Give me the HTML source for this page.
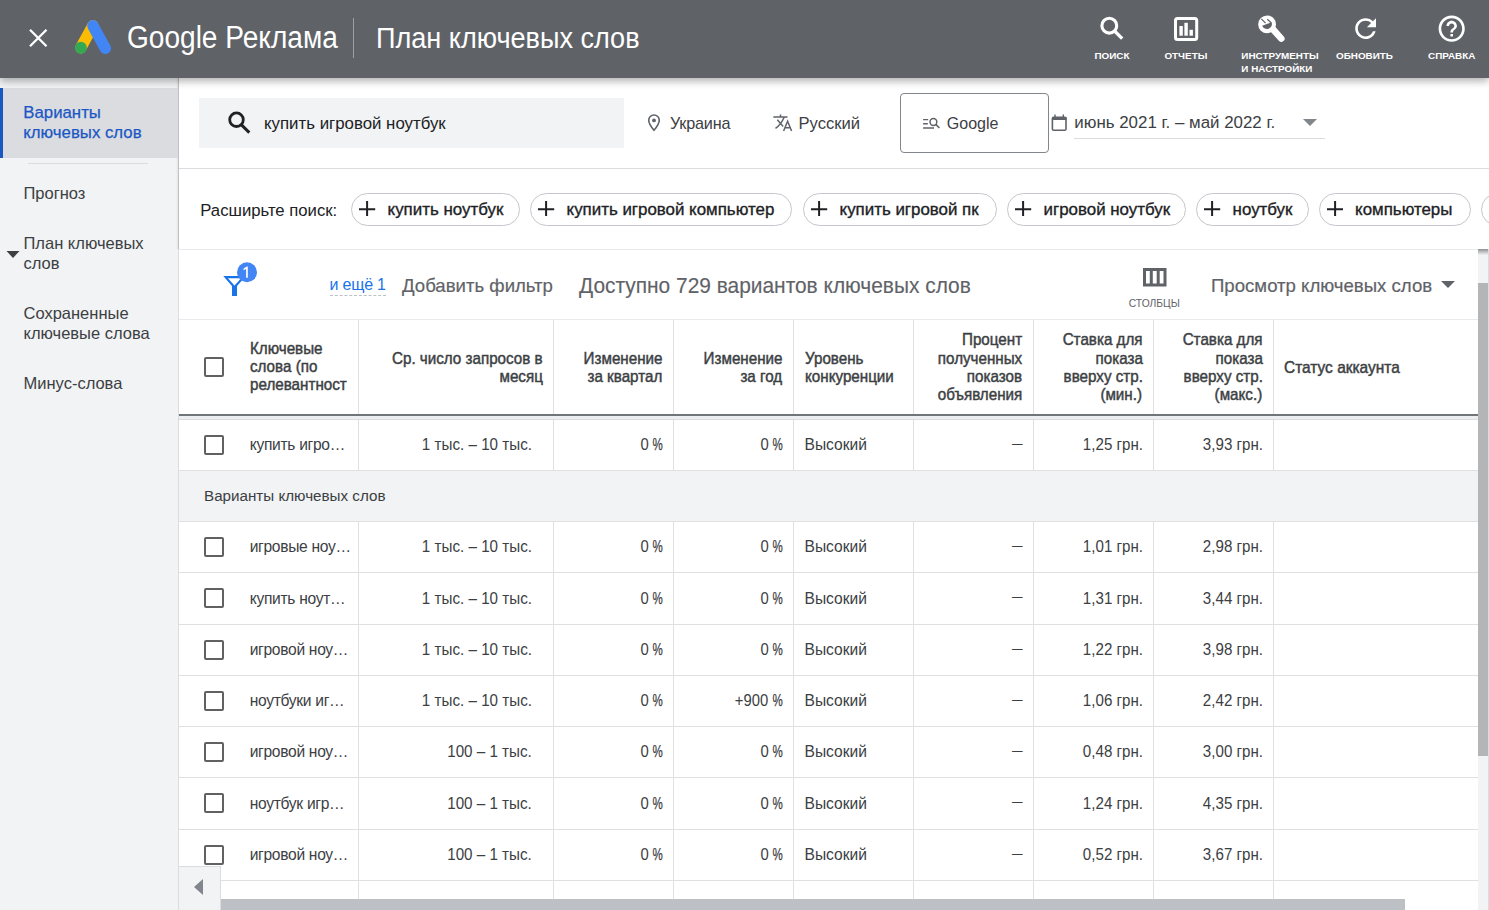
<!DOCTYPE html><html><head><meta charset="utf-8"><title>План ключевых слов</title><style>html,body{margin:0;padding:0}body{width:1489px;height:910px;overflow:hidden;position:relative;background:#fff;font-family:"Liberation Sans",sans-serif}</style></head><body>
<div style="position:absolute;left:0px;top:78px;width:178px;height:832px;background:#f1f3f4;"></div>
<div style="position:absolute;left:178px;top:78px;width:1px;height:832px;background:#dadce0;"></div>
<div style="position:absolute;left:178px;top:78px;width:1px;height:171px;background:#bfc1c4;"></div>
<div style="position:absolute;left:176px;top:78px;width:2px;height:171px;background:linear-gradient(90deg,rgba(0,0,0,0),rgba(0,0,0,0.07));"></div>
<div style="position:absolute;left:0px;top:88px;width:178px;height:70px;background:#dadce0;"></div>
<div style="position:absolute;left:0px;top:88px;width:3px;height:70px;background:#1a57c2;"></div>
<div style="position:absolute;top:103.00px;font-size:16.8px;line-height:20px;color:#1a57c4;white-space:nowrap;-webkit-text-stroke:0.25px #1a57c4;left:23.30px;">Варианты</div>
<div style="position:absolute;top:123.00px;font-size:16.8px;line-height:20px;color:#1a57c4;white-space:nowrap;-webkit-text-stroke:0.25px #1a57c4;left:23.30px;">ключевых слов</div>
<div style="position:absolute;left:28px;top:163px;width:120px;height:1px;background:#dadce0;"></div>
<div style="position:absolute;top:183.00px;font-size:16.5px;line-height:20px;color:#3c4043;white-space:nowrap;left:23.50px;">Прогноз</div>
<div style="position:absolute;top:233.00px;font-size:16.5px;line-height:20px;color:#3c4043;white-space:nowrap;left:23.50px;">План ключевых</div>
<div style="position:absolute;top:253.00px;font-size:16.5px;line-height:20px;color:#3c4043;white-space:nowrap;left:23.50px;">слов</div>
<svg style="position:absolute;left:6px;top:251px;" width="14" height="7" viewBox="0 0 14 7"><path d="M0.5 0H13.5L7 7z" fill="#3c4043"/></svg>
<div style="position:absolute;top:303.00px;font-size:16.5px;line-height:20px;color:#3c4043;white-space:nowrap;left:23.50px;">Сохраненные</div>
<div style="position:absolute;top:323.00px;font-size:16.5px;line-height:20px;color:#3c4043;white-space:nowrap;left:23.50px;">ключевые слова</div>
<div style="position:absolute;top:373.00px;font-size:16.5px;line-height:20px;color:#3c4043;white-space:nowrap;left:23.50px;">Минус-слова</div>
<div style="position:absolute;left:199px;top:98px;width:425px;height:50px;background:#f1f3f4;"></div>
<svg style="position:absolute;left:215px;top:100px;" width="45" height="45" viewBox="215 100 45 45"><circle cx="236.5" cy="119.7" r="6.8" stroke="#202124" stroke-width="2.8" fill="none"/><path d="M241 124.4L249.3 132.6" stroke="#202124" stroke-width="3"/></svg>
<div style="position:absolute;top:114.00px;font-size:17px;line-height:20px;color:#202124;white-space:nowrap;transform:scaleX(0.99);transform-origin:left center;left:264.40px;">купить игровой ноутбук</div>
<svg style="position:absolute;left:0px;top:0px;" width="1489" height="170" viewBox="0 0 1489 170"><path d="M654 130.3C650.6 126.3 648.7 123.3 648.7 120.3A5.3 5.3 0 0 1 659.3 120.3C659.3 123.3 657.4 126.3 654 130.3Z" stroke="#5f6368" stroke-width="1.6" fill="none" stroke-linejoin="round"/><circle cx="654" cy="120.4" r="1.9" fill="#5f6368"/><path d="M773.3 117H787.5M780.5 114.6V117M784 117.5C782 122.5 779 126 775.5 128.3M777.3 119.8L783.2 126.4M783.6 131L787.6 121.3L791.6 131M784.8 127.8H790.4" stroke="#5f6368" stroke-width="1.5" fill="none"/><path d="M923.1 119.6H928.2M923.1 123.8H927.8M923.1 128H934" stroke="#5f6368" stroke-width="1.4"/><circle cx="933.4" cy="122" r="3.4" stroke="#5f6368" stroke-width="1.5" fill="none"/><path d="M935.8 124.4L939.4 128" stroke="#5f6368" stroke-width="1.6"/><rect x="1052.4" y="117.2" width="13.6" height="13" rx="1.3" stroke="#5f6368" stroke-width="1.6" fill="none"/><rect x="1052" y="117" width="14.5" height="3" fill="#5f6368"/><path d="M1055 114.5V117M1063.3 114.5V117" stroke="#5f6368" stroke-width="1.4"/></svg>
<div style="position:absolute;top:114.00px;font-size:16.2px;line-height:19px;color:#3c4043;white-space:nowrap;letter-spacing:-0.2px;left:670.00px;">Украина</div>
<div style="position:absolute;top:114.00px;font-size:16.6px;line-height:20px;color:#3c4043;white-space:nowrap;left:798.50px;">Русский</div>
<div style="position:absolute;left:900px;top:93px;width:147px;height:58px;background:transparent;border:1px solid #80868b;border-radius:4px;"></div>
<div style="position:absolute;top:114.00px;font-size:16px;line-height:19px;color:#3c4043;white-space:nowrap;left:946.80px;">Google</div>
<div style="position:absolute;top:113.00px;font-size:16.9px;line-height:20px;color:#3c4043;white-space:nowrap;left:1074.30px;">июнь 2021 г. – май 2022 г.</div>
<svg style="position:absolute;left:1302.5px;top:119px;" width="14" height="7" viewBox="0 0 14 7"><path d="M0 0H14L7 7z" fill="#80868b"/></svg>
<div style="position:absolute;left:1074px;top:138px;width:251px;height:1px;background:#dadce0;"></div>
<div style="position:absolute;left:179px;top:168px;width:1310px;height:1px;background:#dadce0;"></div>
<div style="position:absolute;top:201.00px;font-size:16.7px;line-height:20px;color:#202124;white-space:nowrap;left:200.30px;">Расширьте поиск:</div>
<div style="position:absolute;left:351px;top:193px;width:167px;height:31px;background:transparent;border:1px solid #c4c7cb;border-radius:17px;"></div>
<svg style="position:absolute;left:359px;top:200.7px;" width="16.5" height="15.5" viewBox="0 0 16.5 15.5"><path d="M0 8.2H16.2M8.1 0V15.3" stroke="#202124" stroke-width="2" fill="none"/></svg>
<div style="position:absolute;top:200.00px;font-size:16.9px;line-height:20px;color:#202124;white-space:nowrap;-webkit-text-stroke:0.35px #202124;left:387.60px;">купить ноутбук</div>
<div style="position:absolute;left:530px;top:193px;width:260px;height:31px;background:transparent;border:1px solid #c4c7cb;border-radius:17px;"></div>
<svg style="position:absolute;left:538px;top:200.7px;" width="16.5" height="15.5" viewBox="0 0 16.5 15.5"><path d="M0 8.2H16.2M8.1 0V15.3" stroke="#202124" stroke-width="2" fill="none"/></svg>
<div style="position:absolute;top:200.00px;font-size:16.9px;line-height:20px;color:#202124;white-space:nowrap;-webkit-text-stroke:0.35px #202124;left:566.60px;">купить игровой компьютер</div>
<div style="position:absolute;left:803px;top:193px;width:191.5px;height:31px;background:transparent;border:1px solid #c4c7cb;border-radius:17px;"></div>
<svg style="position:absolute;left:811px;top:200.7px;" width="16.5" height="15.5" viewBox="0 0 16.5 15.5"><path d="M0 8.2H16.2M8.1 0V15.3" stroke="#202124" stroke-width="2" fill="none"/></svg>
<div style="position:absolute;top:200.00px;font-size:16.9px;line-height:20px;color:#202124;white-space:nowrap;-webkit-text-stroke:0.35px #202124;left:839.60px;">купить игровой пк</div>
<div style="position:absolute;left:1007px;top:193px;width:177px;height:31px;background:transparent;border:1px solid #c4c7cb;border-radius:17px;"></div>
<svg style="position:absolute;left:1015px;top:200.7px;" width="16.5" height="15.5" viewBox="0 0 16.5 15.5"><path d="M0 8.2H16.2M8.1 0V15.3" stroke="#202124" stroke-width="2" fill="none"/></svg>
<div style="position:absolute;top:200.00px;font-size:16.9px;line-height:20px;color:#202124;white-space:nowrap;-webkit-text-stroke:0.35px #202124;left:1043.60px;">игровой ноутбук</div>
<div style="position:absolute;left:1196px;top:193px;width:110.5px;height:31px;background:transparent;border:1px solid #c4c7cb;border-radius:17px;"></div>
<svg style="position:absolute;left:1204px;top:200.7px;" width="16.5" height="15.5" viewBox="0 0 16.5 15.5"><path d="M0 8.2H16.2M8.1 0V15.3" stroke="#202124" stroke-width="2" fill="none"/></svg>
<div style="position:absolute;top:200.00px;font-size:16.9px;line-height:20px;color:#202124;white-space:nowrap;-webkit-text-stroke:0.35px #202124;left:1232.60px;">ноутбук</div>
<div style="position:absolute;left:1318.5px;top:193px;width:150.0px;height:31px;background:transparent;border:1px solid #c4c7cb;border-radius:17px;"></div>
<svg style="position:absolute;left:1326.5px;top:200.7px;" width="16.5" height="15.5" viewBox="0 0 16.5 15.5"><path d="M0 8.2H16.2M8.1 0V15.3" stroke="#202124" stroke-width="2" fill="none"/></svg>
<div style="position:absolute;top:200.00px;font-size:16.9px;line-height:20px;color:#202124;white-space:nowrap;-webkit-text-stroke:0.35px #202124;left:1355.10px;">компьютеры</div>
<div style="position:absolute;left:1480.5px;top:193px;width:157.5px;height:31px;background:transparent;border:1px solid #c4c7cb;border-radius:17px;"></div>
<div style="position:absolute;left:179px;top:249px;width:1299px;height:1px;background:#e8eaed;"></div>
<svg style="position:absolute;left:215px;top:255px;" width="50" height="50" viewBox="215 255 50 50"><path d="M225.6 277.1H243.5L234.5 287.3z" stroke="#1a73e8" stroke-width="2.1" fill="none" stroke-linejoin="miter"/><rect x="232" y="286" width="5" height="10" fill="#1a73e8"/><circle cx="247" cy="272.3" r="10" fill="#4285f4"/></svg>
<svg style="position:absolute;left:215px;top:255px;" width="50" height="50" viewBox="215 255 50 50"><path d="M247.8 277.8V266.6H246.9L243.6 268.6V270.2L246.1 268.9V277.8z" fill="#fff"/></svg>
<div style="position:absolute;top:275.00px;font-size:16px;line-height:19px;color:#1a73e8;white-space:nowrap;letter-spacing:-0.2px;left:329.50px;">и ещё 1</div>
<div style="position:absolute;left:330px;top:295px;width:56px;height:0;border-top:1px dashed #bdc1c6"></div>
<div style="position:absolute;top:275.00px;font-size:18.6px;line-height:22px;color:#5f6368;white-space:nowrap;-webkit-text-stroke:0.2px #5f6368;left:402.00px;">Добавить фильтр</div>
<div style="position:absolute;top:273.00px;font-size:22px;line-height:26px;color:#5f6368;white-space:nowrap;-webkit-text-stroke:0.15px #5f6368;transform:scaleX(0.95);transform-origin:left center;left:579.00px;">Доступно 729 вариантов ключевых слов</div>
<svg style="position:absolute;left:1143px;top:268px;" width="23.5" height="18.5" viewBox="0 0 23.5 18.5"><path d="M1.5 1.5H22V17H1.5zM8.3 1.5V17M15.2 1.5V17" stroke="#5f6368" stroke-width="3" fill="none"/></svg>
<div style="position:absolute;top:298.00px;font-size:10.3px;line-height:12px;color:#5f6368;white-space:nowrap;left:1104.30px;width:100px;text-align:center;">СТОЛБЦЫ</div>
<div style="position:absolute;top:275.00px;font-size:18.6px;line-height:22px;color:#5f6368;white-space:nowrap;-webkit-text-stroke:0.2px #5f6368;left:1211.00px;">Просмотр ключевых слов</div>
<svg style="position:absolute;left:1441px;top:281px;" width="14" height="7" viewBox="0 0 14 7"><path d="M0 0H14L7 7z" fill="#5f6368"/></svg>
<div style="position:absolute;left:179px;top:319px;width:1299px;height:1px;background:#e8eaed;"></div>
<div style="position:absolute;left:358px;top:320px;width:1px;height:94px;background:#e0e0e0;"></div>
<div style="position:absolute;left:553px;top:320px;width:1px;height:94px;background:#e0e0e0;"></div>
<div style="position:absolute;left:673px;top:320px;width:1px;height:94px;background:#e0e0e0;"></div>
<div style="position:absolute;left:793px;top:320px;width:1px;height:94px;background:#e0e0e0;"></div>
<div style="position:absolute;left:913px;top:320px;width:1px;height:94px;background:#e0e0e0;"></div>
<div style="position:absolute;left:1033px;top:320px;width:1px;height:94px;background:#e0e0e0;"></div>
<div style="position:absolute;left:1153px;top:320px;width:1px;height:94px;background:#e0e0e0;"></div>
<div style="position:absolute;left:1273px;top:320px;width:1px;height:94px;background:#e0e0e0;"></div>
<div style="position:absolute;left:179px;top:414px;width:1299px;height:2px;background:#70757a;"></div>
<div style="position:absolute;left:179px;top:416px;width:1299px;height:3px;background:#eceef0;"></div>
<div style="position:absolute;left:179px;top:419px;width:1299px;height:1px;background:#dadce0;"></div>
<div style="position:absolute;left:204px;top:357.0px;width:16px;height:16px;border:2px solid #616161;border-radius:2px"></div>
<div style="position:absolute;top:339.00px;font-size:15.7px;line-height:19px;color:#3c4043;white-space:nowrap;-webkit-text-stroke:0.45px #3c4043;transform:scaleX(0.968);transform-origin:left center;left:249.70px;">Ключевые</div>
<div style="position:absolute;top:357.00px;font-size:15.7px;line-height:19px;color:#3c4043;white-space:nowrap;-webkit-text-stroke:0.45px #3c4043;transform:scaleX(0.968);transform-origin:left center;left:249.70px;">слова (по</div>
<div style="position:absolute;top:375.00px;font-size:15.7px;line-height:19px;color:#3c4043;white-space:nowrap;-webkit-text-stroke:0.45px #3c4043;transform:scaleX(0.968);transform-origin:left center;left:249.70px;">релевантност</div>
<div style="position:absolute;top:349.00px;font-size:15.7px;line-height:19px;color:#3c4043;white-space:nowrap;-webkit-text-stroke:0.45px #3c4043;transform:scaleX(0.968);transform-origin:right center;right:946.40px;text-align:right;">Ср. число запросов в</div>
<div style="position:absolute;top:367.00px;font-size:15.7px;line-height:19px;color:#3c4043;white-space:nowrap;-webkit-text-stroke:0.45px #3c4043;transform:scaleX(0.968);transform-origin:right center;right:946.40px;text-align:right;">месяц</div>
<div style="position:absolute;top:349.00px;font-size:15.7px;line-height:19px;color:#3c4043;white-space:nowrap;-webkit-text-stroke:0.45px #3c4043;transform:scaleX(0.968);transform-origin:right center;right:826.50px;text-align:right;">Изменение</div>
<div style="position:absolute;top:367.00px;font-size:15.7px;line-height:19px;color:#3c4043;white-space:nowrap;-webkit-text-stroke:0.45px #3c4043;transform:scaleX(0.968);transform-origin:right center;right:826.50px;text-align:right;">за квартал</div>
<div style="position:absolute;top:349.00px;font-size:15.7px;line-height:19px;color:#3c4043;white-space:nowrap;-webkit-text-stroke:0.45px #3c4043;transform:scaleX(0.968);transform-origin:right center;right:706.50px;text-align:right;">Изменение</div>
<div style="position:absolute;top:367.00px;font-size:15.7px;line-height:19px;color:#3c4043;white-space:nowrap;-webkit-text-stroke:0.45px #3c4043;transform:scaleX(0.968);transform-origin:right center;right:706.50px;text-align:right;">за год</div>
<div style="position:absolute;top:349.00px;font-size:15.7px;line-height:19px;color:#3c4043;white-space:nowrap;-webkit-text-stroke:0.45px #3c4043;transform:scaleX(0.968);transform-origin:left center;left:804.70px;">Уровень</div>
<div style="position:absolute;top:367.00px;font-size:15.7px;line-height:19px;color:#3c4043;white-space:nowrap;-webkit-text-stroke:0.45px #3c4043;transform:scaleX(0.968);transform-origin:left center;left:804.70px;">конкуренции</div>
<div style="position:absolute;top:330.00px;font-size:15.7px;line-height:19px;color:#3c4043;white-space:nowrap;-webkit-text-stroke:0.45px #3c4043;transform:scaleX(0.968);transform-origin:right center;right:466.50px;text-align:right;">Процент</div>
<div style="position:absolute;top:349.00px;font-size:15.7px;line-height:19px;color:#3c4043;white-space:nowrap;-webkit-text-stroke:0.45px #3c4043;transform:scaleX(0.968);transform-origin:right center;right:466.50px;text-align:right;">полученных</div>
<div style="position:absolute;top:367.00px;font-size:15.7px;line-height:19px;color:#3c4043;white-space:nowrap;-webkit-text-stroke:0.45px #3c4043;transform:scaleX(0.968);transform-origin:right center;right:466.50px;text-align:right;">показов</div>
<div style="position:absolute;top:385.00px;font-size:15.7px;line-height:19px;color:#3c4043;white-space:nowrap;-webkit-text-stroke:0.45px #3c4043;transform:scaleX(0.968);transform-origin:right center;right:466.50px;text-align:right;">объявления</div>
<div style="position:absolute;top:330.00px;font-size:15.7px;line-height:19px;color:#3c4043;white-space:nowrap;-webkit-text-stroke:0.45px #3c4043;transform:scaleX(0.968);transform-origin:right center;right:346.50px;text-align:right;">Ставка для</div>
<div style="position:absolute;top:349.00px;font-size:15.7px;line-height:19px;color:#3c4043;white-space:nowrap;-webkit-text-stroke:0.45px #3c4043;transform:scaleX(0.968);transform-origin:right center;right:346.50px;text-align:right;">показа</div>
<div style="position:absolute;top:367.00px;font-size:15.7px;line-height:19px;color:#3c4043;white-space:nowrap;-webkit-text-stroke:0.45px #3c4043;transform:scaleX(0.968);transform-origin:right center;right:346.50px;text-align:right;">вверху стр.</div>
<div style="position:absolute;top:385.00px;font-size:15.7px;line-height:19px;color:#3c4043;white-space:nowrap;-webkit-text-stroke:0.45px #3c4043;transform:scaleX(0.968);transform-origin:right center;right:346.50px;text-align:right;">(мин.)</div>
<div style="position:absolute;top:330.00px;font-size:15.7px;line-height:19px;color:#3c4043;white-space:nowrap;-webkit-text-stroke:0.45px #3c4043;transform:scaleX(0.968);transform-origin:right center;right:226.50px;text-align:right;">Ставка для</div>
<div style="position:absolute;top:349.00px;font-size:15.7px;line-height:19px;color:#3c4043;white-space:nowrap;-webkit-text-stroke:0.45px #3c4043;transform:scaleX(0.968);transform-origin:right center;right:226.50px;text-align:right;">показа</div>
<div style="position:absolute;top:367.00px;font-size:15.7px;line-height:19px;color:#3c4043;white-space:nowrap;-webkit-text-stroke:0.45px #3c4043;transform:scaleX(0.968);transform-origin:right center;right:226.50px;text-align:right;">вверху стр.</div>
<div style="position:absolute;top:385.00px;font-size:15.7px;line-height:19px;color:#3c4043;white-space:nowrap;-webkit-text-stroke:0.45px #3c4043;transform:scaleX(0.968);transform-origin:right center;right:226.50px;text-align:right;">(макс.)</div>
<div style="position:absolute;top:358.00px;font-size:15.7px;line-height:19px;color:#3c4043;white-space:nowrap;-webkit-text-stroke:0.45px #3c4043;transform:scaleX(0.985);transform-origin:left center;left:1284.00px;">Статус аккаунта</div>
<div style="position:absolute;left:358px;top:420px;width:1px;height:50px;background:#e0e0e0;"></div>
<div style="position:absolute;left:553px;top:420px;width:1px;height:50px;background:#e0e0e0;"></div>
<div style="position:absolute;left:673px;top:420px;width:1px;height:50px;background:#e0e0e0;"></div>
<div style="position:absolute;left:793px;top:420px;width:1px;height:50px;background:#e0e0e0;"></div>
<div style="position:absolute;left:913px;top:420px;width:1px;height:50px;background:#e0e0e0;"></div>
<div style="position:absolute;left:1033px;top:420px;width:1px;height:50px;background:#e0e0e0;"></div>
<div style="position:absolute;left:1153px;top:420px;width:1px;height:50px;background:#e0e0e0;"></div>
<div style="position:absolute;left:1273px;top:420px;width:1px;height:50px;background:#e0e0e0;"></div>
<div style="position:absolute;left:204px;top:434.5px;width:16px;height:16px;border:2px solid #616161;border-radius:2px"></div>
<div style="position:absolute;top:435.00px;font-size:15.6px;line-height:19px;color:#3c4043;white-space:nowrap;letter-spacing:-0.3px;left:249.70px;">купить игро…</div>
<div style="position:absolute;top:435.00px;font-size:15.6px;line-height:19px;color:#3c4043;white-space:nowrap;transform:scaleX(0.975);transform-origin:right center;right:956.70px;text-align:right;">1 тыс. – 10 тыс.</div>
<div style="position:absolute;top:435.00px;font-size:15.6px;line-height:19px;color:#3c4043;white-space:nowrap;transform:scaleX(0.95);transform-origin:right center;right:840.80px;text-align:right;">0</div>
<div style="position:absolute;top:435.00px;font-size:15.6px;line-height:19px;color:#3c4043;white-space:nowrap;-webkit-text-stroke:0.25px #3c4043;transform:scaleX(0.74);transform-origin:right center;right:826.20px;text-align:right;">%</div>
<div style="position:absolute;top:435.00px;font-size:15.6px;line-height:19px;color:#3c4043;white-space:nowrap;transform:scaleX(0.95);transform-origin:right center;right:720.80px;text-align:right;">0</div>
<div style="position:absolute;top:435.00px;font-size:15.6px;line-height:19px;color:#3c4043;white-space:nowrap;-webkit-text-stroke:0.25px #3c4043;transform:scaleX(0.74);transform-origin:right center;right:706.20px;text-align:right;">%</div>
<div style="position:absolute;top:435.00px;font-size:15.6px;line-height:19px;color:#3c4043;white-space:nowrap;left:804.50px;">Высокий</div>
<div style="position:absolute;top:434.00px;font-size:15.2px;line-height:18px;color:#3c4043;white-space:nowrap;transform:scaleX(1.25);transform-origin:right center;right:466.40px;text-align:right;">–</div>
<div style="position:absolute;top:435.00px;font-size:15.6px;line-height:19px;color:#3c4043;white-space:nowrap;transform:scaleX(0.97);transform-origin:right center;right:346.50px;text-align:right;">1,25 грн.</div>
<div style="position:absolute;top:435.00px;font-size:15.6px;line-height:19px;color:#3c4043;white-space:nowrap;transform:scaleX(0.97);transform-origin:right center;right:226.50px;text-align:right;">3,93 грн.</div>
<div style="position:absolute;left:179px;top:470px;width:1299px;height:1px;background:#e0e0e0;"></div>
<div style="position:absolute;left:179px;top:471px;width:1299px;height:50px;background:#f1f3f4;"></div>
<div style="position:absolute;top:487.00px;font-size:15.2px;line-height:18px;color:#3c4043;white-space:nowrap;left:204.00px;">Варианты ключевых слов</div>
<div style="position:absolute;left:179px;top:521px;width:1299px;height:1px;background:#e0e0e0;"></div>
<div style="position:absolute;left:358px;top:522px;width:1px;height:50px;background:#e0e0e0;"></div>
<div style="position:absolute;left:553px;top:522px;width:1px;height:50px;background:#e0e0e0;"></div>
<div style="position:absolute;left:673px;top:522px;width:1px;height:50px;background:#e0e0e0;"></div>
<div style="position:absolute;left:793px;top:522px;width:1px;height:50px;background:#e0e0e0;"></div>
<div style="position:absolute;left:913px;top:522px;width:1px;height:50px;background:#e0e0e0;"></div>
<div style="position:absolute;left:1033px;top:522px;width:1px;height:50px;background:#e0e0e0;"></div>
<div style="position:absolute;left:1153px;top:522px;width:1px;height:50px;background:#e0e0e0;"></div>
<div style="position:absolute;left:1273px;top:522px;width:1px;height:50px;background:#e0e0e0;"></div>
<div style="position:absolute;left:204px;top:536.5px;width:16px;height:16px;border:2px solid #616161;border-radius:2px"></div>
<div style="position:absolute;top:537.00px;font-size:15.6px;line-height:19px;color:#3c4043;white-space:nowrap;letter-spacing:-0.3px;left:249.70px;">игровые ноу…</div>
<div style="position:absolute;top:537.00px;font-size:15.6px;line-height:19px;color:#3c4043;white-space:nowrap;transform:scaleX(0.975);transform-origin:right center;right:956.70px;text-align:right;">1 тыс. – 10 тыс.</div>
<div style="position:absolute;top:537.00px;font-size:15.6px;line-height:19px;color:#3c4043;white-space:nowrap;transform:scaleX(0.95);transform-origin:right center;right:840.80px;text-align:right;">0</div>
<div style="position:absolute;top:537.00px;font-size:15.6px;line-height:19px;color:#3c4043;white-space:nowrap;-webkit-text-stroke:0.25px #3c4043;transform:scaleX(0.74);transform-origin:right center;right:826.20px;text-align:right;">%</div>
<div style="position:absolute;top:537.00px;font-size:15.6px;line-height:19px;color:#3c4043;white-space:nowrap;transform:scaleX(0.95);transform-origin:right center;right:720.80px;text-align:right;">0</div>
<div style="position:absolute;top:537.00px;font-size:15.6px;line-height:19px;color:#3c4043;white-space:nowrap;-webkit-text-stroke:0.25px #3c4043;transform:scaleX(0.74);transform-origin:right center;right:706.20px;text-align:right;">%</div>
<div style="position:absolute;top:537.00px;font-size:15.6px;line-height:19px;color:#3c4043;white-space:nowrap;left:804.50px;">Высокий</div>
<div style="position:absolute;top:536.00px;font-size:15.2px;line-height:18px;color:#3c4043;white-space:nowrap;transform:scaleX(1.25);transform-origin:right center;right:466.40px;text-align:right;">–</div>
<div style="position:absolute;top:537.00px;font-size:15.6px;line-height:19px;color:#3c4043;white-space:nowrap;transform:scaleX(0.97);transform-origin:right center;right:346.50px;text-align:right;">1,01 грн.</div>
<div style="position:absolute;top:537.00px;font-size:15.6px;line-height:19px;color:#3c4043;white-space:nowrap;transform:scaleX(0.97);transform-origin:right center;right:226.50px;text-align:right;">2,98 грн.</div>
<div style="position:absolute;left:179px;top:572px;width:1299px;height:1px;background:#e0e0e0;"></div>
<div style="position:absolute;left:358px;top:573px;width:1px;height:51px;background:#e0e0e0;"></div>
<div style="position:absolute;left:553px;top:573px;width:1px;height:51px;background:#e0e0e0;"></div>
<div style="position:absolute;left:673px;top:573px;width:1px;height:51px;background:#e0e0e0;"></div>
<div style="position:absolute;left:793px;top:573px;width:1px;height:51px;background:#e0e0e0;"></div>
<div style="position:absolute;left:913px;top:573px;width:1px;height:51px;background:#e0e0e0;"></div>
<div style="position:absolute;left:1033px;top:573px;width:1px;height:51px;background:#e0e0e0;"></div>
<div style="position:absolute;left:1153px;top:573px;width:1px;height:51px;background:#e0e0e0;"></div>
<div style="position:absolute;left:1273px;top:573px;width:1px;height:51px;background:#e0e0e0;"></div>
<div style="position:absolute;left:204px;top:588.0px;width:16px;height:16px;border:2px solid #616161;border-radius:2px"></div>
<div style="position:absolute;top:589.00px;font-size:15.6px;line-height:19px;color:#3c4043;white-space:nowrap;letter-spacing:-0.3px;left:249.70px;">купить ноут…</div>
<div style="position:absolute;top:589.00px;font-size:15.6px;line-height:19px;color:#3c4043;white-space:nowrap;transform:scaleX(0.975);transform-origin:right center;right:956.70px;text-align:right;">1 тыс. – 10 тыс.</div>
<div style="position:absolute;top:589.00px;font-size:15.6px;line-height:19px;color:#3c4043;white-space:nowrap;transform:scaleX(0.95);transform-origin:right center;right:840.80px;text-align:right;">0</div>
<div style="position:absolute;top:589.00px;font-size:15.6px;line-height:19px;color:#3c4043;white-space:nowrap;-webkit-text-stroke:0.25px #3c4043;transform:scaleX(0.74);transform-origin:right center;right:826.20px;text-align:right;">%</div>
<div style="position:absolute;top:589.00px;font-size:15.6px;line-height:19px;color:#3c4043;white-space:nowrap;transform:scaleX(0.95);transform-origin:right center;right:720.80px;text-align:right;">0</div>
<div style="position:absolute;top:589.00px;font-size:15.6px;line-height:19px;color:#3c4043;white-space:nowrap;-webkit-text-stroke:0.25px #3c4043;transform:scaleX(0.74);transform-origin:right center;right:706.20px;text-align:right;">%</div>
<div style="position:absolute;top:589.00px;font-size:15.6px;line-height:19px;color:#3c4043;white-space:nowrap;left:804.50px;">Высокий</div>
<div style="position:absolute;top:587.00px;font-size:15.2px;line-height:18px;color:#3c4043;white-space:nowrap;transform:scaleX(1.25);transform-origin:right center;right:466.40px;text-align:right;">–</div>
<div style="position:absolute;top:589.00px;font-size:15.6px;line-height:19px;color:#3c4043;white-space:nowrap;transform:scaleX(0.97);transform-origin:right center;right:346.50px;text-align:right;">1,31 грн.</div>
<div style="position:absolute;top:589.00px;font-size:15.6px;line-height:19px;color:#3c4043;white-space:nowrap;transform:scaleX(0.97);transform-origin:right center;right:226.50px;text-align:right;">3,44 грн.</div>
<div style="position:absolute;left:179px;top:624px;width:1299px;height:1px;background:#e0e0e0;"></div>
<div style="position:absolute;left:358px;top:625px;width:1px;height:50px;background:#e0e0e0;"></div>
<div style="position:absolute;left:553px;top:625px;width:1px;height:50px;background:#e0e0e0;"></div>
<div style="position:absolute;left:673px;top:625px;width:1px;height:50px;background:#e0e0e0;"></div>
<div style="position:absolute;left:793px;top:625px;width:1px;height:50px;background:#e0e0e0;"></div>
<div style="position:absolute;left:913px;top:625px;width:1px;height:50px;background:#e0e0e0;"></div>
<div style="position:absolute;left:1033px;top:625px;width:1px;height:50px;background:#e0e0e0;"></div>
<div style="position:absolute;left:1153px;top:625px;width:1px;height:50px;background:#e0e0e0;"></div>
<div style="position:absolute;left:1273px;top:625px;width:1px;height:50px;background:#e0e0e0;"></div>
<div style="position:absolute;left:204px;top:639.5px;width:16px;height:16px;border:2px solid #616161;border-radius:2px"></div>
<div style="position:absolute;top:640.00px;font-size:15.6px;line-height:19px;color:#3c4043;white-space:nowrap;letter-spacing:-0.3px;left:249.70px;">игровой ноу…</div>
<div style="position:absolute;top:640.00px;font-size:15.6px;line-height:19px;color:#3c4043;white-space:nowrap;transform:scaleX(0.975);transform-origin:right center;right:956.70px;text-align:right;">1 тыс. – 10 тыс.</div>
<div style="position:absolute;top:640.00px;font-size:15.6px;line-height:19px;color:#3c4043;white-space:nowrap;transform:scaleX(0.95);transform-origin:right center;right:840.80px;text-align:right;">0</div>
<div style="position:absolute;top:640.00px;font-size:15.6px;line-height:19px;color:#3c4043;white-space:nowrap;-webkit-text-stroke:0.25px #3c4043;transform:scaleX(0.74);transform-origin:right center;right:826.20px;text-align:right;">%</div>
<div style="position:absolute;top:640.00px;font-size:15.6px;line-height:19px;color:#3c4043;white-space:nowrap;transform:scaleX(0.95);transform-origin:right center;right:720.80px;text-align:right;">0</div>
<div style="position:absolute;top:640.00px;font-size:15.6px;line-height:19px;color:#3c4043;white-space:nowrap;-webkit-text-stroke:0.25px #3c4043;transform:scaleX(0.74);transform-origin:right center;right:706.20px;text-align:right;">%</div>
<div style="position:absolute;top:640.00px;font-size:15.6px;line-height:19px;color:#3c4043;white-space:nowrap;left:804.50px;">Высокий</div>
<div style="position:absolute;top:639.00px;font-size:15.2px;line-height:18px;color:#3c4043;white-space:nowrap;transform:scaleX(1.25);transform-origin:right center;right:466.40px;text-align:right;">–</div>
<div style="position:absolute;top:640.00px;font-size:15.6px;line-height:19px;color:#3c4043;white-space:nowrap;transform:scaleX(0.97);transform-origin:right center;right:346.50px;text-align:right;">1,22 грн.</div>
<div style="position:absolute;top:640.00px;font-size:15.6px;line-height:19px;color:#3c4043;white-space:nowrap;transform:scaleX(0.97);transform-origin:right center;right:226.50px;text-align:right;">3,98 грн.</div>
<div style="position:absolute;left:179px;top:675px;width:1299px;height:1px;background:#e0e0e0;"></div>
<div style="position:absolute;left:358px;top:676px;width:1px;height:50px;background:#e0e0e0;"></div>
<div style="position:absolute;left:553px;top:676px;width:1px;height:50px;background:#e0e0e0;"></div>
<div style="position:absolute;left:673px;top:676px;width:1px;height:50px;background:#e0e0e0;"></div>
<div style="position:absolute;left:793px;top:676px;width:1px;height:50px;background:#e0e0e0;"></div>
<div style="position:absolute;left:913px;top:676px;width:1px;height:50px;background:#e0e0e0;"></div>
<div style="position:absolute;left:1033px;top:676px;width:1px;height:50px;background:#e0e0e0;"></div>
<div style="position:absolute;left:1153px;top:676px;width:1px;height:50px;background:#e0e0e0;"></div>
<div style="position:absolute;left:1273px;top:676px;width:1px;height:50px;background:#e0e0e0;"></div>
<div style="position:absolute;left:204px;top:690.5px;width:16px;height:16px;border:2px solid #616161;border-radius:2px"></div>
<div style="position:absolute;top:691.00px;font-size:15.6px;line-height:19px;color:#3c4043;white-space:nowrap;letter-spacing:-0.3px;left:249.70px;">ноутбуки иг…</div>
<div style="position:absolute;top:691.00px;font-size:15.6px;line-height:19px;color:#3c4043;white-space:nowrap;transform:scaleX(0.975);transform-origin:right center;right:956.70px;text-align:right;">1 тыс. – 10 тыс.</div>
<div style="position:absolute;top:691.00px;font-size:15.6px;line-height:19px;color:#3c4043;white-space:nowrap;transform:scaleX(0.95);transform-origin:right center;right:840.80px;text-align:right;">0</div>
<div style="position:absolute;top:691.00px;font-size:15.6px;line-height:19px;color:#3c4043;white-space:nowrap;-webkit-text-stroke:0.25px #3c4043;transform:scaleX(0.74);transform-origin:right center;right:826.20px;text-align:right;">%</div>
<div style="position:absolute;top:691.00px;font-size:15.6px;line-height:19px;color:#3c4043;white-space:nowrap;transform:scaleX(0.95);transform-origin:right center;right:720.80px;text-align:right;">+900</div>
<div style="position:absolute;top:691.00px;font-size:15.6px;line-height:19px;color:#3c4043;white-space:nowrap;-webkit-text-stroke:0.25px #3c4043;transform:scaleX(0.74);transform-origin:right center;right:706.20px;text-align:right;">%</div>
<div style="position:absolute;top:691.00px;font-size:15.6px;line-height:19px;color:#3c4043;white-space:nowrap;left:804.50px;">Высокий</div>
<div style="position:absolute;top:690.00px;font-size:15.2px;line-height:18px;color:#3c4043;white-space:nowrap;transform:scaleX(1.25);transform-origin:right center;right:466.40px;text-align:right;">–</div>
<div style="position:absolute;top:691.00px;font-size:15.6px;line-height:19px;color:#3c4043;white-space:nowrap;transform:scaleX(0.97);transform-origin:right center;right:346.50px;text-align:right;">1,06 грн.</div>
<div style="position:absolute;top:691.00px;font-size:15.6px;line-height:19px;color:#3c4043;white-space:nowrap;transform:scaleX(0.97);transform-origin:right center;right:226.50px;text-align:right;">2,42 грн.</div>
<div style="position:absolute;left:179px;top:726px;width:1299px;height:1px;background:#e0e0e0;"></div>
<div style="position:absolute;left:358px;top:727px;width:1px;height:50px;background:#e0e0e0;"></div>
<div style="position:absolute;left:553px;top:727px;width:1px;height:50px;background:#e0e0e0;"></div>
<div style="position:absolute;left:673px;top:727px;width:1px;height:50px;background:#e0e0e0;"></div>
<div style="position:absolute;left:793px;top:727px;width:1px;height:50px;background:#e0e0e0;"></div>
<div style="position:absolute;left:913px;top:727px;width:1px;height:50px;background:#e0e0e0;"></div>
<div style="position:absolute;left:1033px;top:727px;width:1px;height:50px;background:#e0e0e0;"></div>
<div style="position:absolute;left:1153px;top:727px;width:1px;height:50px;background:#e0e0e0;"></div>
<div style="position:absolute;left:1273px;top:727px;width:1px;height:50px;background:#e0e0e0;"></div>
<div style="position:absolute;left:204px;top:741.5px;width:16px;height:16px;border:2px solid #616161;border-radius:2px"></div>
<div style="position:absolute;top:742.00px;font-size:15.6px;line-height:19px;color:#3c4043;white-space:nowrap;letter-spacing:-0.3px;left:249.70px;">игровой ноу…</div>
<div style="position:absolute;top:742.00px;font-size:15.6px;line-height:19px;color:#3c4043;white-space:nowrap;transform:scaleX(0.975);transform-origin:right center;right:956.70px;text-align:right;">100 – 1 тыс.</div>
<div style="position:absolute;top:742.00px;font-size:15.6px;line-height:19px;color:#3c4043;white-space:nowrap;transform:scaleX(0.95);transform-origin:right center;right:840.80px;text-align:right;">0</div>
<div style="position:absolute;top:742.00px;font-size:15.6px;line-height:19px;color:#3c4043;white-space:nowrap;-webkit-text-stroke:0.25px #3c4043;transform:scaleX(0.74);transform-origin:right center;right:826.20px;text-align:right;">%</div>
<div style="position:absolute;top:742.00px;font-size:15.6px;line-height:19px;color:#3c4043;white-space:nowrap;transform:scaleX(0.95);transform-origin:right center;right:720.80px;text-align:right;">0</div>
<div style="position:absolute;top:742.00px;font-size:15.6px;line-height:19px;color:#3c4043;white-space:nowrap;-webkit-text-stroke:0.25px #3c4043;transform:scaleX(0.74);transform-origin:right center;right:706.20px;text-align:right;">%</div>
<div style="position:absolute;top:742.00px;font-size:15.6px;line-height:19px;color:#3c4043;white-space:nowrap;left:804.50px;">Высокий</div>
<div style="position:absolute;top:741.00px;font-size:15.2px;line-height:18px;color:#3c4043;white-space:nowrap;transform:scaleX(1.25);transform-origin:right center;right:466.40px;text-align:right;">–</div>
<div style="position:absolute;top:742.00px;font-size:15.6px;line-height:19px;color:#3c4043;white-space:nowrap;transform:scaleX(0.97);transform-origin:right center;right:346.50px;text-align:right;">0,48 грн.</div>
<div style="position:absolute;top:742.00px;font-size:15.6px;line-height:19px;color:#3c4043;white-space:nowrap;transform:scaleX(0.97);transform-origin:right center;right:226.50px;text-align:right;">3,00 грн.</div>
<div style="position:absolute;left:179px;top:777px;width:1299px;height:1px;background:#e0e0e0;"></div>
<div style="position:absolute;left:358px;top:778px;width:1px;height:51px;background:#e0e0e0;"></div>
<div style="position:absolute;left:553px;top:778px;width:1px;height:51px;background:#e0e0e0;"></div>
<div style="position:absolute;left:673px;top:778px;width:1px;height:51px;background:#e0e0e0;"></div>
<div style="position:absolute;left:793px;top:778px;width:1px;height:51px;background:#e0e0e0;"></div>
<div style="position:absolute;left:913px;top:778px;width:1px;height:51px;background:#e0e0e0;"></div>
<div style="position:absolute;left:1033px;top:778px;width:1px;height:51px;background:#e0e0e0;"></div>
<div style="position:absolute;left:1153px;top:778px;width:1px;height:51px;background:#e0e0e0;"></div>
<div style="position:absolute;left:1273px;top:778px;width:1px;height:51px;background:#e0e0e0;"></div>
<div style="position:absolute;left:204px;top:793.0px;width:16px;height:16px;border:2px solid #616161;border-radius:2px"></div>
<div style="position:absolute;top:794.00px;font-size:15.6px;line-height:19px;color:#3c4043;white-space:nowrap;letter-spacing:-0.3px;left:249.70px;">ноутбук игр…</div>
<div style="position:absolute;top:794.00px;font-size:15.6px;line-height:19px;color:#3c4043;white-space:nowrap;transform:scaleX(0.975);transform-origin:right center;right:956.70px;text-align:right;">100 – 1 тыс.</div>
<div style="position:absolute;top:794.00px;font-size:15.6px;line-height:19px;color:#3c4043;white-space:nowrap;transform:scaleX(0.95);transform-origin:right center;right:840.80px;text-align:right;">0</div>
<div style="position:absolute;top:794.00px;font-size:15.6px;line-height:19px;color:#3c4043;white-space:nowrap;-webkit-text-stroke:0.25px #3c4043;transform:scaleX(0.74);transform-origin:right center;right:826.20px;text-align:right;">%</div>
<div style="position:absolute;top:794.00px;font-size:15.6px;line-height:19px;color:#3c4043;white-space:nowrap;transform:scaleX(0.95);transform-origin:right center;right:720.80px;text-align:right;">0</div>
<div style="position:absolute;top:794.00px;font-size:15.6px;line-height:19px;color:#3c4043;white-space:nowrap;-webkit-text-stroke:0.25px #3c4043;transform:scaleX(0.74);transform-origin:right center;right:706.20px;text-align:right;">%</div>
<div style="position:absolute;top:794.00px;font-size:15.6px;line-height:19px;color:#3c4043;white-space:nowrap;left:804.50px;">Высокий</div>
<div style="position:absolute;top:792.00px;font-size:15.2px;line-height:18px;color:#3c4043;white-space:nowrap;transform:scaleX(1.25);transform-origin:right center;right:466.40px;text-align:right;">–</div>
<div style="position:absolute;top:794.00px;font-size:15.6px;line-height:19px;color:#3c4043;white-space:nowrap;transform:scaleX(0.97);transform-origin:right center;right:346.50px;text-align:right;">1,24 грн.</div>
<div style="position:absolute;top:794.00px;font-size:15.6px;line-height:19px;color:#3c4043;white-space:nowrap;transform:scaleX(0.97);transform-origin:right center;right:226.50px;text-align:right;">4,35 грн.</div>
<div style="position:absolute;left:179px;top:829px;width:1299px;height:1px;background:#e0e0e0;"></div>
<div style="position:absolute;left:358px;top:830px;width:1px;height:50px;background:#e0e0e0;"></div>
<div style="position:absolute;left:553px;top:830px;width:1px;height:50px;background:#e0e0e0;"></div>
<div style="position:absolute;left:673px;top:830px;width:1px;height:50px;background:#e0e0e0;"></div>
<div style="position:absolute;left:793px;top:830px;width:1px;height:50px;background:#e0e0e0;"></div>
<div style="position:absolute;left:913px;top:830px;width:1px;height:50px;background:#e0e0e0;"></div>
<div style="position:absolute;left:1033px;top:830px;width:1px;height:50px;background:#e0e0e0;"></div>
<div style="position:absolute;left:1153px;top:830px;width:1px;height:50px;background:#e0e0e0;"></div>
<div style="position:absolute;left:1273px;top:830px;width:1px;height:50px;background:#e0e0e0;"></div>
<div style="position:absolute;left:204px;top:844.5px;width:16px;height:16px;border:2px solid #616161;border-radius:2px"></div>
<div style="position:absolute;top:845.00px;font-size:15.6px;line-height:19px;color:#3c4043;white-space:nowrap;letter-spacing:-0.3px;left:249.70px;">игровой ноу…</div>
<div style="position:absolute;top:845.00px;font-size:15.6px;line-height:19px;color:#3c4043;white-space:nowrap;transform:scaleX(0.975);transform-origin:right center;right:956.70px;text-align:right;">100 – 1 тыс.</div>
<div style="position:absolute;top:845.00px;font-size:15.6px;line-height:19px;color:#3c4043;white-space:nowrap;transform:scaleX(0.95);transform-origin:right center;right:840.80px;text-align:right;">0</div>
<div style="position:absolute;top:845.00px;font-size:15.6px;line-height:19px;color:#3c4043;white-space:nowrap;-webkit-text-stroke:0.25px #3c4043;transform:scaleX(0.74);transform-origin:right center;right:826.20px;text-align:right;">%</div>
<div style="position:absolute;top:845.00px;font-size:15.6px;line-height:19px;color:#3c4043;white-space:nowrap;transform:scaleX(0.95);transform-origin:right center;right:720.80px;text-align:right;">0</div>
<div style="position:absolute;top:845.00px;font-size:15.6px;line-height:19px;color:#3c4043;white-space:nowrap;-webkit-text-stroke:0.25px #3c4043;transform:scaleX(0.74);transform-origin:right center;right:706.20px;text-align:right;">%</div>
<div style="position:absolute;top:845.00px;font-size:15.6px;line-height:19px;color:#3c4043;white-space:nowrap;left:804.50px;">Высокий</div>
<div style="position:absolute;top:844.00px;font-size:15.2px;line-height:18px;color:#3c4043;white-space:nowrap;transform:scaleX(1.25);transform-origin:right center;right:466.40px;text-align:right;">–</div>
<div style="position:absolute;top:845.00px;font-size:15.6px;line-height:19px;color:#3c4043;white-space:nowrap;transform:scaleX(0.97);transform-origin:right center;right:346.50px;text-align:right;">0,52 грн.</div>
<div style="position:absolute;top:845.00px;font-size:15.6px;line-height:19px;color:#3c4043;white-space:nowrap;transform:scaleX(0.97);transform-origin:right center;right:226.50px;text-align:right;">3,67 грн.</div>
<div style="position:absolute;left:179px;top:880px;width:1299px;height:1px;background:#e0e0e0;"></div>
<div style="position:absolute;left:358px;top:881px;width:1px;height:50px;background:#e0e0e0;"></div>
<div style="position:absolute;left:553px;top:881px;width:1px;height:50px;background:#e0e0e0;"></div>
<div style="position:absolute;left:673px;top:881px;width:1px;height:50px;background:#e0e0e0;"></div>
<div style="position:absolute;left:793px;top:881px;width:1px;height:50px;background:#e0e0e0;"></div>
<div style="position:absolute;left:913px;top:881px;width:1px;height:50px;background:#e0e0e0;"></div>
<div style="position:absolute;left:1033px;top:881px;width:1px;height:50px;background:#e0e0e0;"></div>
<div style="position:absolute;left:1153px;top:881px;width:1px;height:50px;background:#e0e0e0;"></div>
<div style="position:absolute;left:1273px;top:881px;width:1px;height:50px;background:#e0e0e0;"></div>
<div style="position:absolute;left:179px;top:931px;width:1299px;height:1px;background:#e0e0e0;"></div>
<div style="position:absolute;left:1478px;top:249px;width:10px;height:661px;background:#f1f3f4;"></div>
<div style="position:absolute;left:1488px;top:249px;width:1px;height:661px;background:#dadce0;"></div>
<div style="position:absolute;left:1478px;top:283px;width:10px;height:473px;background:#b4b5b7;"></div>
<div style="position:absolute;left:1478px;top:249px;width:10px;height:6px;background:linear-gradient(#8e9093,#f1f3f4);"></div>
<div style="position:absolute;left:179px;top:866px;width:42px;height:44px;background:#f1f3f4;border-top:1px solid #dadce0;border-right:1px solid #dadce0;box-sizing:border-box;"></div>
<svg style="position:absolute;left:194px;top:879px;" width="9" height="16" viewBox="0 0 9 16"><path d="M9 0V16L0 8z" fill="#80868b"/></svg>
<div style="position:absolute;left:221px;top:899px;width:1184px;height:11px;background:#bdc1c6;"></div>
<div style="position:absolute;left:0px;top:0px;width:1489px;height:78px;background:#5f6368;box-shadow:0 3px 8px rgba(0,0,0,.32);z-index:5"></div>
<div style="position:absolute;left:0;top:0;width:1489px;height:78px;z-index:6">
<svg style="position:absolute;left:0px;top:0px;" width="1489" height="78" viewBox="0 0 1489 78"><path d="M30 29.8L46.5 46.3M46.5 29.8L30 46.3" stroke="#fff" stroke-width="2.3" fill="none"/><path d="M80.8 47.7L92.9 25.8" stroke="#fbbc04" stroke-width="11.4" stroke-linecap="round"/><path d="M92.9 25.8L105.3 48.3" stroke="#4285f4" stroke-width="11.4" stroke-linecap="round"/><circle cx="80.8" cy="47.7" r="6" fill="#34a853"/><rect x="353" y="18" width="1" height="40" fill="#9aa0a6"/></svg>
<div style="position:absolute;top:19.00px;font-size:31px;line-height:37px;color:#fff;white-space:nowrap;transform:scaleX(0.905);transform-origin:left center;left:126.50px;">Google Реклама</div>
<div style="position:absolute;top:21.00px;font-size:28.8px;line-height:35px;color:#fff;white-space:nowrap;transform:scaleX(0.94);transform-origin:left center;left:376.30px;">План ключевых слов</div>
<svg style="position:absolute;left:1080px;top:0px;" width="140" height="50" viewBox="1080 0 140 50"><circle cx="1109.3" cy="25.7" r="7.4" stroke="#fff" stroke-width="3.1" fill="none"/><path d="M1114.6 31L1122.2 38.6" stroke="#fff" stroke-width="3.3"/><rect x="1175.5" y="18.6" width="21.2" height="20.8" rx="2" stroke="#fff" stroke-width="3" fill="none"/><rect x="1179.4" y="26" width="3.4" height="9.7" fill="#fff"/><rect x="1184.4" y="22.8" width="3.4" height="12.9" fill="#fff"/><rect x="1189.5" y="29.8" width="3.4" height="5.9" fill="#fff"/></svg>
<svg style="position:absolute;left:1250px;top:10px;" width="40" height="40" viewBox="1250 10 40 40"><circle cx="1267.1" cy="24.4" r="8.9" fill="#fff"/><path d="M1272.5 28.8L1281.3 38.6" stroke="#fff" stroke-width="6.6" stroke-linecap="round"/><path d="M1262.2 25.8A4.9 4.9 0 0 0 1271.6 22.2Z" fill="#5f6368"/><path d="M1261.3 18.8L1265.6 23.2M1267.3 19.3L1271.2 22.8" stroke="#5f6368" stroke-width="1.2" fill="none"/></svg>
<svg style="position:absolute;left:1349.5px;top:13.2px;" width="31.2" height="31.2" viewBox="0 0 24 24"><path fill="#fff" d="M17.65 6.35C16.2 4.9 14.21 4 12 4c-4.42 0-7.99 3.58-7.99 8s3.57 8 7.99 8c3.73 0 6.84-2.55 7.73-6h-2.08c-.82 2.33-3.04 4-5.65 4-3.31 0-6-2.69-6-6s2.690-6 6-6c1.66 0 3.14.69 4.22 1.78L13 11h7V4l-2.35 2.35z"/></svg>
<svg style="position:absolute;left:1436.3px;top:13.1px;" width="31.4" height="31.4" viewBox="0 0 24 24"><path fill="#fff" d="M11 18h2v-2h-2v2zm1-16C6.48 2 2 6.48 2 12s4.48 10 10 10 10-4.48 10-10S17.52 2 12 2zm0 18c-4.41 0-8-3.59-8-8s3.59-8 8-8 8 3.59 8 8-3.59 8-8 8zm0-14c-2.21 0-4 1.79-4 4h2c0-1.1.9-2 2-2s2 .9 2 2c0 2-3 1.75-3 5h2c0-2.25 3-2.5 3-5 0-2.21-1.79-4-4-4z"/></svg>
<div style="position:absolute;top:50.00px;font-size:9.9px;line-height:12px;color:#fff;white-space:nowrap;font-weight:700;left:1072.00px;width:80px;text-align:center;">ПОИСК</div>
<div style="position:absolute;top:50.00px;font-size:9.9px;line-height:12px;color:#fff;white-space:nowrap;font-weight:700;left:1145.90px;width:80px;text-align:center;">ОТЧЕТЫ</div>
<div style="position:absolute;top:50.00px;font-size:9.9px;line-height:12px;color:#fff;white-space:nowrap;font-weight:700;left:1241.30px;">ИНСТРУМЕНТЫ</div>
<div style="position:absolute;top:63.00px;font-size:9.9px;line-height:12px;color:#fff;white-space:nowrap;font-weight:700;left:1241.30px;">И НАСТРОЙКИ</div>
<div style="position:absolute;top:50.00px;font-size:9.9px;line-height:12px;color:#fff;white-space:nowrap;font-weight:700;left:1324.50px;width:80px;text-align:center;">ОБНОВИТЬ</div>
<div style="position:absolute;top:50.00px;font-size:9.9px;line-height:12px;color:#fff;white-space:nowrap;font-weight:700;left:1411.70px;width:80px;text-align:center;">СПРАВКА</div>
</div>
</body></html>
